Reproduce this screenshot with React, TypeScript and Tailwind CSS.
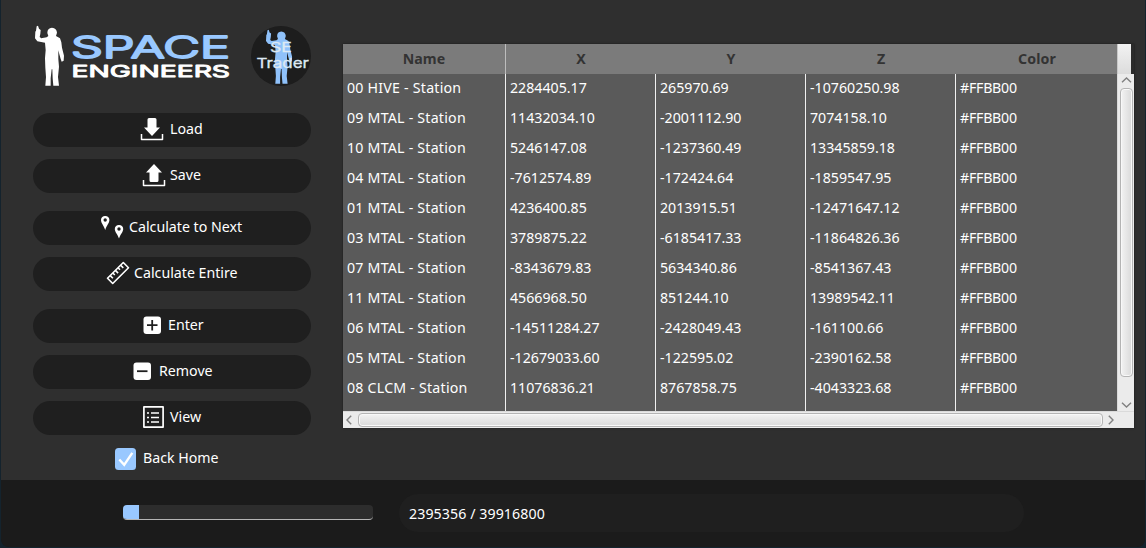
import type { ReactNode } from "react";

const FIGURE =
  "M50 34L54 32L57 41L62 45L61 56L59 66L64 70L80 67L85 63L82 54Q82 39 96 38Q110 39 111 53L108 63L120 70L124 82L126 98L132 122L131 137L125 140L122 132L118 118L115 106L115 132L117 155L114 186L117 212L100 212L98 190L97 163L95 163L92 190L92 212L76 212L78 186L76 158L75 130L77 105L75 83L52 79L45 70L46 50L48 47Z";

function Logo() {
  return (
    <svg width="200" height="64" viewBox="32 24 200 64" className="block">
      <path d={FIGURE} fill="#fff" transform="translate(20 15) scale(0.33333)" />
      <text x="71" y="58" textLength="159" lengthAdjust="spacingAndGlyphs" fontSize="29.500" fontWeight="300" fontFamily="Inter, sans-serif" fill="#99c8ff" stroke="#99c8ff" strokeWidth="1.800" strokeLinejoin="round">
        SPACE
      </text>
      <text x="71.500" y="76.500" textLength="158.500" lengthAdjust="spacingAndGlyphs" fontSize="16.500" fontWeight="400" fontFamily="Inter, sans-serif" fill="#fff" stroke="#fff" strokeWidth="0.900" strokeLinejoin="round">
        ENGINEERS
      </text>
    </svg>
  );
}

function TraderBadge() {
  return (
    <svg width="62" height="62" viewBox="250 25 62 62" className="block">
      <circle cx="281" cy="56" r="30" fill="#1d1d1d" />
      <path d={FIGURE} fill="#8fc1fa" transform="translate(252.500 20.100) scale(0.3)" />
      <g fontFamily="Inter, sans-serif" fontSize="13.500" fontWeight="400" fill="#dde9f4" stroke="#dde9f4" strokeWidth="0.300">
        <text x="270" y="52" textLength="22" lengthAdjust="spacingAndGlyphs">SE</text>
        <text x="256.500" y="68" textLength="52.500" lengthAdjust="spacingAndGlyphs">Trader</text>
      </g>
    </svg>
  );
}

function Icon({ children }: { children: ReactNode }) {
  return (
    <svg width="24" height="24" viewBox="0 0 24 24" className="-mt-0.5 block shrink-0 text-white">
      {children}
    </svg>
  );
}

const tray = <path d="M1.500 17V22.500H22.500V17" fill="none" stroke="currentColor" strokeWidth="1.500" strokeLinejoin="round" />;

const LoadIcon = (
  <Icon>
    <path d="M9 1h6a1.500 1.500 0 0 1 1.500 1.500v8h3.500L12 19L4 10.500h3.500V2.500A1.500 1.500 0 0 1 9 1Z" fill="currentColor" />
    {tray}
  </Icon>
);
const SaveIcon = (
  <Icon>
    <path d="M12 1L20 9.500h-3.500V17.500a1.500 1.500 0 0 1-1.500 1.500h-6a1.500 1.500 0 0 1-1.500-1.500V9.500H4Z" fill="currentColor" />
    {tray}
  </Icon>
);
const PinsIcon = (
  <Icon>
    <path fillRule="evenodd" fill="currentColor" d="M5.200 1a4 4 0 0 1 4.200 4C9.400 8 6.800 10 5.200 15C3.600 10 1 8 1 5a4 4 0 0 1 4.200-4ZM5.200 3.300a1.700 1.700 0 1 0 0 3.400a1.700 1.700 0 0 0 0-3.400Z" />
    <path fillRule="evenodd" fill="currentColor" d="M19 10a4 4 0 0 1 4.200 4C23.200 17 20.500 19 19 23.500C17.500 19 14.800 17 14.800 14a4 4 0 0 1 4.200-4ZM19 12.300a1.700 1.700 0 1 0 0 3.400a1.700 1.700 0 0 0 0-3.400Z" />
  </Icon>
);
const RulerIcon = (
  <Icon>
    <g fill="none" stroke="currentColor" strokeWidth="1.600" strokeLinejoin="round">
      <path d="M17.300 1.500L22.500 6.700L6.700 22.500L1.500 17.300Z" />
      <path d="M4.200 14.600l2.700 2.700M6.800 12l2 2M9.400 9.400l2.700 2.700M12 6.800l2 2M14.600 4.200l2.700 2.700" />
    </g>
  </Icon>
);
const PlusIcon = (
  <Icon>
    <rect x="3.500" y="3.500" width="17.500" height="17.500" rx="3" fill="currentColor" />
    <path d="M12.200 7v10.500M7 12.200h10.500" stroke="#1f1f1f" strokeWidth="1.800" />
  </Icon>
);
const MinusIcon = (
  <Icon>
    <rect x="3.500" y="3.500" width="17.500" height="17.500" rx="3" fill="currentColor" />
    <path d="M7 12.200h10.500" stroke="#1f1f1f" strokeWidth="1.800" />
  </Icon>
);
const ListIcon = (
  <Icon>
    <rect x="2.900" y="1.900" width="19.200" height="20.200" fill="none" stroke="currentColor" strokeWidth="1.700" strokeLinejoin="round" />
    <path d="M6 8h2M10 8h8M6 12.500h2M10 12.500h8M6 17h2M10 17h8" stroke="currentColor" strokeWidth="1.600" />
  </Icon>
);

const BUTTONS = [
  { label: "Load", icon: LoadIcon, pad: "pl-[107px] gap-[6px]", gap: "" },
  { label: "Save", icon: SaveIcon, pad: "pl-[109px] gap-[4px]", gap: "mt-3" },
  { label: "Calculate to Next", icon: PinsIcon, pad: "pl-[67px] gap-[5px]", gap: "mt-[18px]" },
  { label: "Calculate Entire", icon: RulerIcon, pad: "pl-[73px] gap-[4px]", gap: "mt-3" },
  { label: "Enter", icon: PlusIcon, pad: "pl-[107px] gap-[4px]", gap: "mt-[18px]" },
  { label: "Remove", icon: MinusIcon, pad: "pl-[97px] gap-[5px]", gap: "mt-3" },
  { label: "View", icon: ListIcon, pad: "pl-[108px] gap-[5px]", gap: "mt-3" },
];

const ROWS = [
  ["00 HIVE - Station", "2284405.17", "265970.69", "-10760250.98"],
  ["09 MTAL - Station", "11432034.10", "-2001112.90", "7074158.10"],
  ["10 MTAL - Station", "5246147.08", "-1237360.49", "13345859.18"],
  ["04 MTAL - Station", "-7612574.89", "-172424.64", "-1859547.95"],
  ["01 MTAL - Station", "4236400.85", "2013915.51", "-12471647.12"],
  ["03 MTAL - Station", "3789875.22", "-6185417.33", "-11864826.36"],
  ["07 MTAL - Station", "-8343679.83", "5634340.86", "-8541367.43"],
  ["11 MTAL - Station", "4566968.50", "851244.10", "13989542.11"],
  ["06 MTAL - Station", "-14511284.27", "-2428049.43", "-161100.66"],
  ["05 MTAL - Station", "-12679033.60", "-122595.02", "-2390162.58"],
  ["08 CLCM - Station", "11076836.21", "8767858.75", "-4043323.68"],
].map((row) => [...row, "#FFBB00"]);

const COLUMNS = [
  { name: "Name", cell: "tracking-[0.22px] border-r", head: "border-r border-[#bdbdbd]" },
  { name: "X", cell: "border-r", head: "" },
  { name: "Y", cell: "border-r", head: "" },
  { name: "Z", cell: "border-r", head: "" },
  { name: "Color", cell: "tracking-[-0.25px]", head: "pl-px tracking-[0.1px]" },
];
const GRID = "grid grid-cols-[163px_150px_150px_150px_161px]";

function Chevron({ d, w, h }: { d: string; w: number; h: number }) {
  return (
    <svg width={w} height={h} viewBox={`0 0 ${w} ${h}`} className="block shrink-0">
      <path d={d} fill="none" stroke="#808080" strokeWidth="1.400" />
    </svg>
  );
}

function StationTable() {
  return (
    <div className="w-[791px] shadow-[0_0_2px_rgba(0,0,0,0.5)]">
      <div className="flex h-[30px] bg-[#2b2b2b]">
        <div className={`${GRID} bg-[#7b7b7b] font-bold text-[#333]`}>
          {COLUMNS.map(({ name, head }) => (
            <div key={name} className={`flex items-center justify-center ${head}`}>
              {name}
            </div>
          ))}
        </div>
        <div className="w-[14px] border-l border-[#c8c8c8] bg-linear-to-b from-[#f2f2f2] to-[#dcdcdc]" />
      </div>
      <div className="flex h-[337px]">
        <div className={`${GRID} bg-[#5a5a5a] text-white`}>
          {COLUMNS.map(({ name, cell }, i) => (
            <div key={name} className={`border-[#f0f0f0] pl-1 ${cell}`}>
              {ROWS.map((row) => (
                <div key={row[0]} className="h-[30px] whitespace-pre leading-[28px]">
                  {row[i]}
                </div>
              ))}
            </div>
          ))}
        </div>
        <div className="flex w-[17px] flex-col items-center border-l border-[#dadada] bg-[#ebebeb] pt-[3px] pb-[3px]">
          <Chevron w={11} h={6} d="M1 5.200L5.500 1L10 5.200" />
          <div className="mt-[5px] h-[289px] w-[13px] rounded-[4px] border border-[#b4b4b4] bg-linear-to-r from-[#f3f3f3] to-[#d9d9d9] shadow-[inset_0_0_0_1px_#f8f8f8]" />
          <div className="grow" />
          <Chevron w={11} h={6} d="M1 0.800L5.500 5L10 0.800" />
        </div>
      </div>
      <div className="flex h-[17px] items-center border-t border-[#dadada] bg-[#ebebeb] pl-[3px]">
        <Chevron w={6} h={10} d="M5.200 0.800L1 5L5.200 9.200" />
        <div className="ml-[6px] h-[14px] w-[745px] rounded-[4px] border border-[#b4b4b4] bg-linear-to-b from-[#f3f3f3] to-[#d9d9d9] shadow-[inset_0_0_0_1px_#f8f8f8]" />
        <div className="w-[5px]" />
        <Chevron w={6} h={10} d="M0.800 0.800L5 5L0.800 9.200" />
      </div>
    </div>
  );
}

export default function App() {
  return (
    <div className="h-[548px] w-[1146px] overflow-hidden bg-[#14232d] px-px pb-px font-['Noto_Sans','Open_Sans',sans-serif] text-[14.2px] text-white">
      <div className="flex h-[547px] flex-col overflow-hidden rounded-b-[8px] bg-[#1b1b1b]">
        <div className="flex h-[480px] bg-[#2f2f2f]">
          <aside className="w-[342px] pt-6 pl-8">
            <header className="flex h-[89px] items-start">
              <div className="-ml-px">
                <Logo />
              </div>
              <div className="ml-[18px] pt-px">
                <TraderBadge />
              </div>
            </header>
            {BUTTONS.map((b) => (
              <button key={b.label} className={`flex h-[34px] w-[278px] items-center rounded-full bg-[#1f1f1f] ${b.pad} ${b.gap}`}>
                {b.icon}
                <span className="-mt-[3px] whitespace-nowrap">{b.label}</span>
              </button>
            ))}
            <label className="mt-[13px] ml-[82px] flex h-[22px] items-center gap-[7px]">
              <svg width="21" height="22" viewBox="0 0 21 22" className="block">
                <rect width="21" height="22" rx="3.500" fill="#99c8ff" />
                <path d="M4.300 11.500L9.200 16.800L17.300 4.800" fill="none" stroke="#fff" strokeWidth="2.400" />
              </svg>
              <span className="-mt-[3px]">Back Home</span>
            </label>
          </aside>
          <main className="pt-11">
            <StationTable />
          </main>
        </div>
        <footer className="flex h-[67px] items-start bg-[#1b1b1b]">
          <div className="mt-[25px] ml-[122px] h-[15px] w-[250px] overflow-hidden rounded-[4px] border-b border-[#b5b5b5] bg-[#2d2d2d]">
            <div className="h-[15px] w-4 bg-[#99c8ff]" />
          </div>
          <div className="mt-[14px] ml-[26px] flex h-[38px] w-[625px] items-center rounded-full bg-[#1f1f1f] pt-0.5 pl-[10px] tracking-[0.08px]">2395356 / 39916800</div>
        </footer>
      </div>
    </div>
  );
}
